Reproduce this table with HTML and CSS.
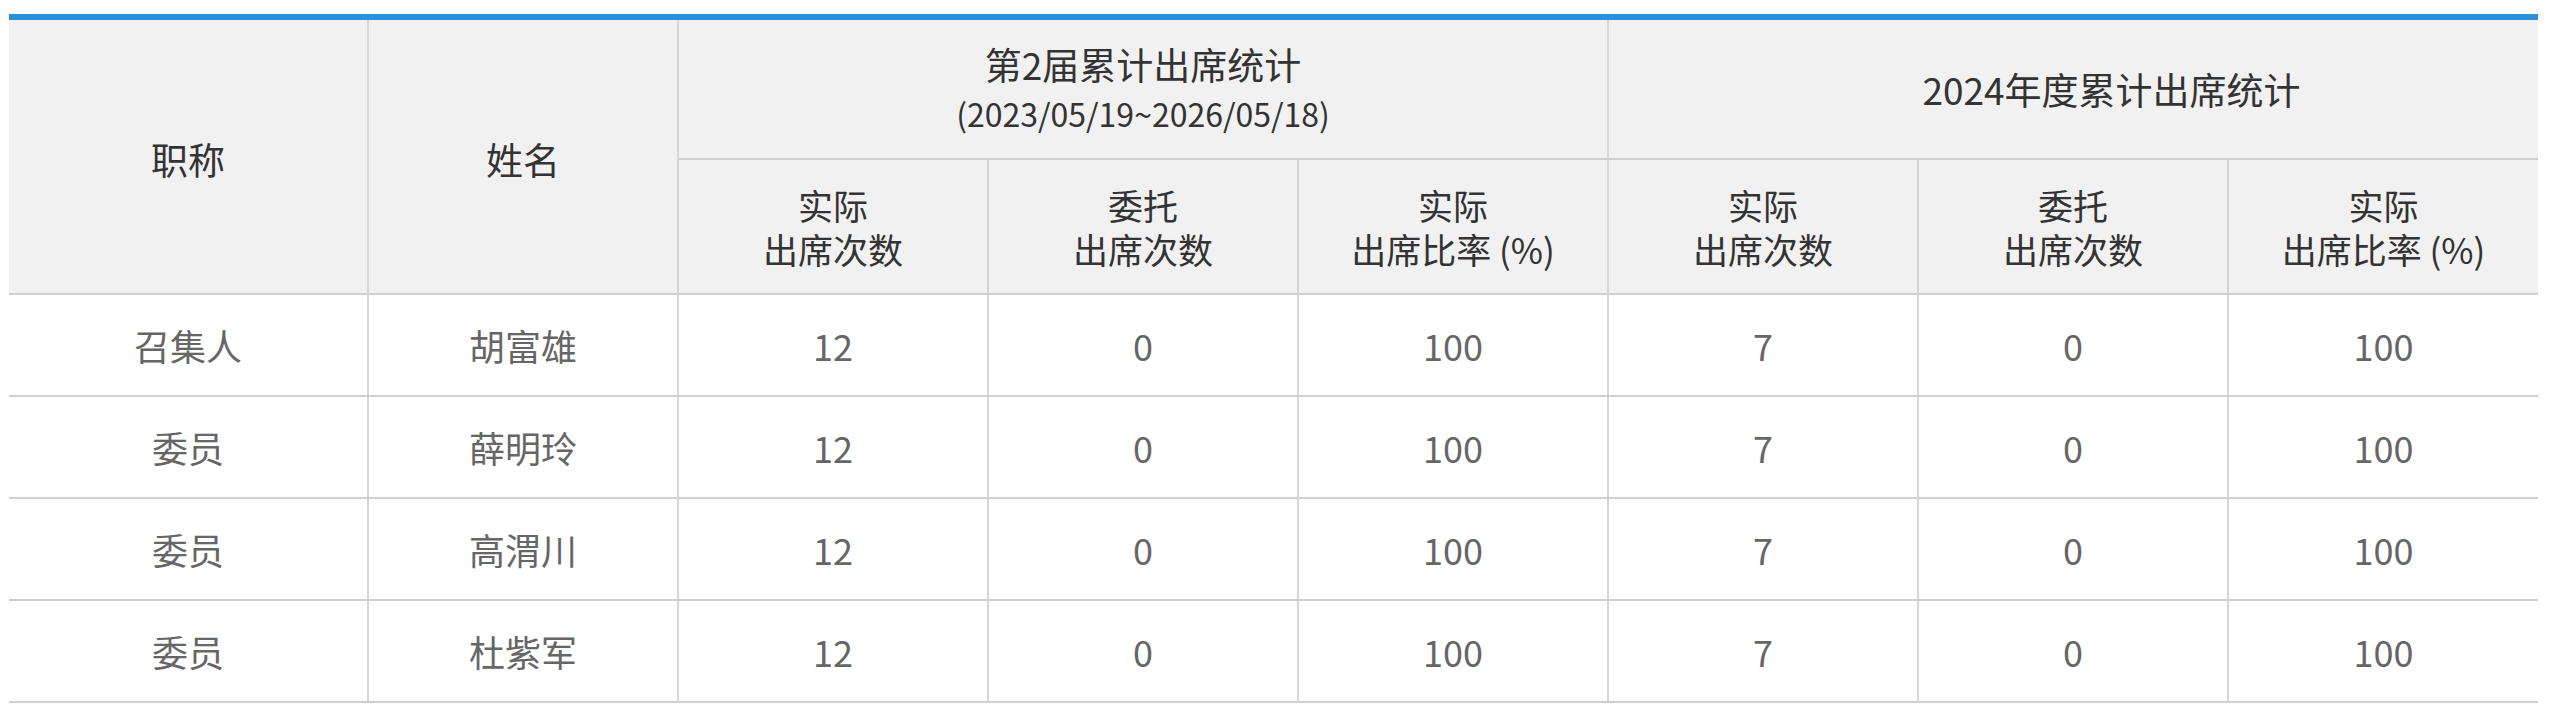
FILE: index.html
```html
<!DOCTYPE html>
<html lang="zh-CN">
<head>
    <meta charset="UTF-8">
    <meta name="viewport" content="width=device-width, initial-scale=1.0">
    <title>出席统计</title>
    <link rel="stylesheet" href="styles.css">
</head>
<body>
    <div class="wrap">
        <table class="stats">
            <colgroup>
                <col class="col-title">
                <col class="col-num"><col class="col-num"><col class="col-num"><col class="col-num">
                <col class="col-num"><col class="col-num"><col class="col-num">
            </colgroup>
            <thead>
                <tr class="head-top">
                    <th rowspan="2" class="big">职称</th>
                    <th rowspan="2" class="big">姓名</th>
                    <th colspan="3" class="big">第2届累计出席统计<br><span class="range">(2023/05/19~2026/05/18)</span></th>
                    <th colspan="3" class="big year">2024年度累计出席统计</th>
                </tr>
                <tr class="head-sub">
                    <th>实际<br>出席次数</th>
                    <th>委托<br>出席次数</th>
                    <th>实际<br>出席比率 (%)</th>
                    <th>实际<br>出席次数</th>
                    <th>委托<br>出席次数</th>
                    <th>实际<br>出席比率 (%)</th>
                </tr>
            </thead>
            <tbody>
                <tr>
                    <td>召集人</td><td>胡富雄</td>
                    <td>12</td><td>0</td><td>100</td>
                    <td>7</td><td>0</td><td>100</td>
                </tr>
                <tr>
                    <td>委员</td><td>薛明玲</td>
                    <td>12</td><td>0</td><td>100</td>
                    <td>7</td><td>0</td><td>100</td>
                </tr>
                <tr>
                    <td>委员</td><td>高渭川</td>
                    <td>12</td><td>0</td><td>100</td>
                    <td>7</td><td>0</td><td>100</td>
                </tr>
                <tr>
                    <td>委员</td><td>杜紫军</td>
                    <td>12</td><td>0</td><td>100</td>
                    <td>7</td><td>0</td><td>100</td>
                </tr>
            </tbody>
        </table>
    </div>
</body>
</html>
```

FILE: styles.css
```css
body {
    margin: 0;
    background: #fff;
    font-family: "Noto Sans CJK SC", "Noto Sans", sans-serif;
}
.wrap {
    padding: 14px 22px 0 9px;
}
.stats {
    width: 100%;
    table-layout: fixed;
    border-collapse: collapse;
    border-top: 6px solid #2a90d8;
}
.col-title {
    width: 359px;
}
.col-num {
    width: 310px;
}
.stats th,
.stats td {
    text-align: center;
    vertical-align: middle;
    padding: 0;
    border: 2px solid #d6d6d6;
    border-top: none;
}
.stats tr > :first-child {
    border-left: none;
}
.stats tr > :last-child {
    border-right: none;
}
.stats th {
    background: #f1f1f1;
    color: #333;
    font-weight: normal;
    font-size: 35px;
    line-height: 44px;
    border-bottom-color: #cfcfcf;
}
.stats th.big {
    font-size: 37px;
    line-height: 47px;
}
.stats th[rowspan] {
    padding-top: 5px;
}
.stats th.year {
    padding-left: 76px;
}
.range {
    font-size: 32px;
}
.stats tr.head-sub th:first-child {
    border-left: 2px solid #d6d6d6;
}
.stats tr.head-sub th:last-child {
    border-right: none;
}
.head-top th {
    height: 138px;
}
.head-sub th {
    height: 133px;
}
.stats td {
    height: 100px;
    font-size: 36px;
    line-height: 44px;
    color: #666;
    border-bottom-color: #d0d0d0;
}
```
